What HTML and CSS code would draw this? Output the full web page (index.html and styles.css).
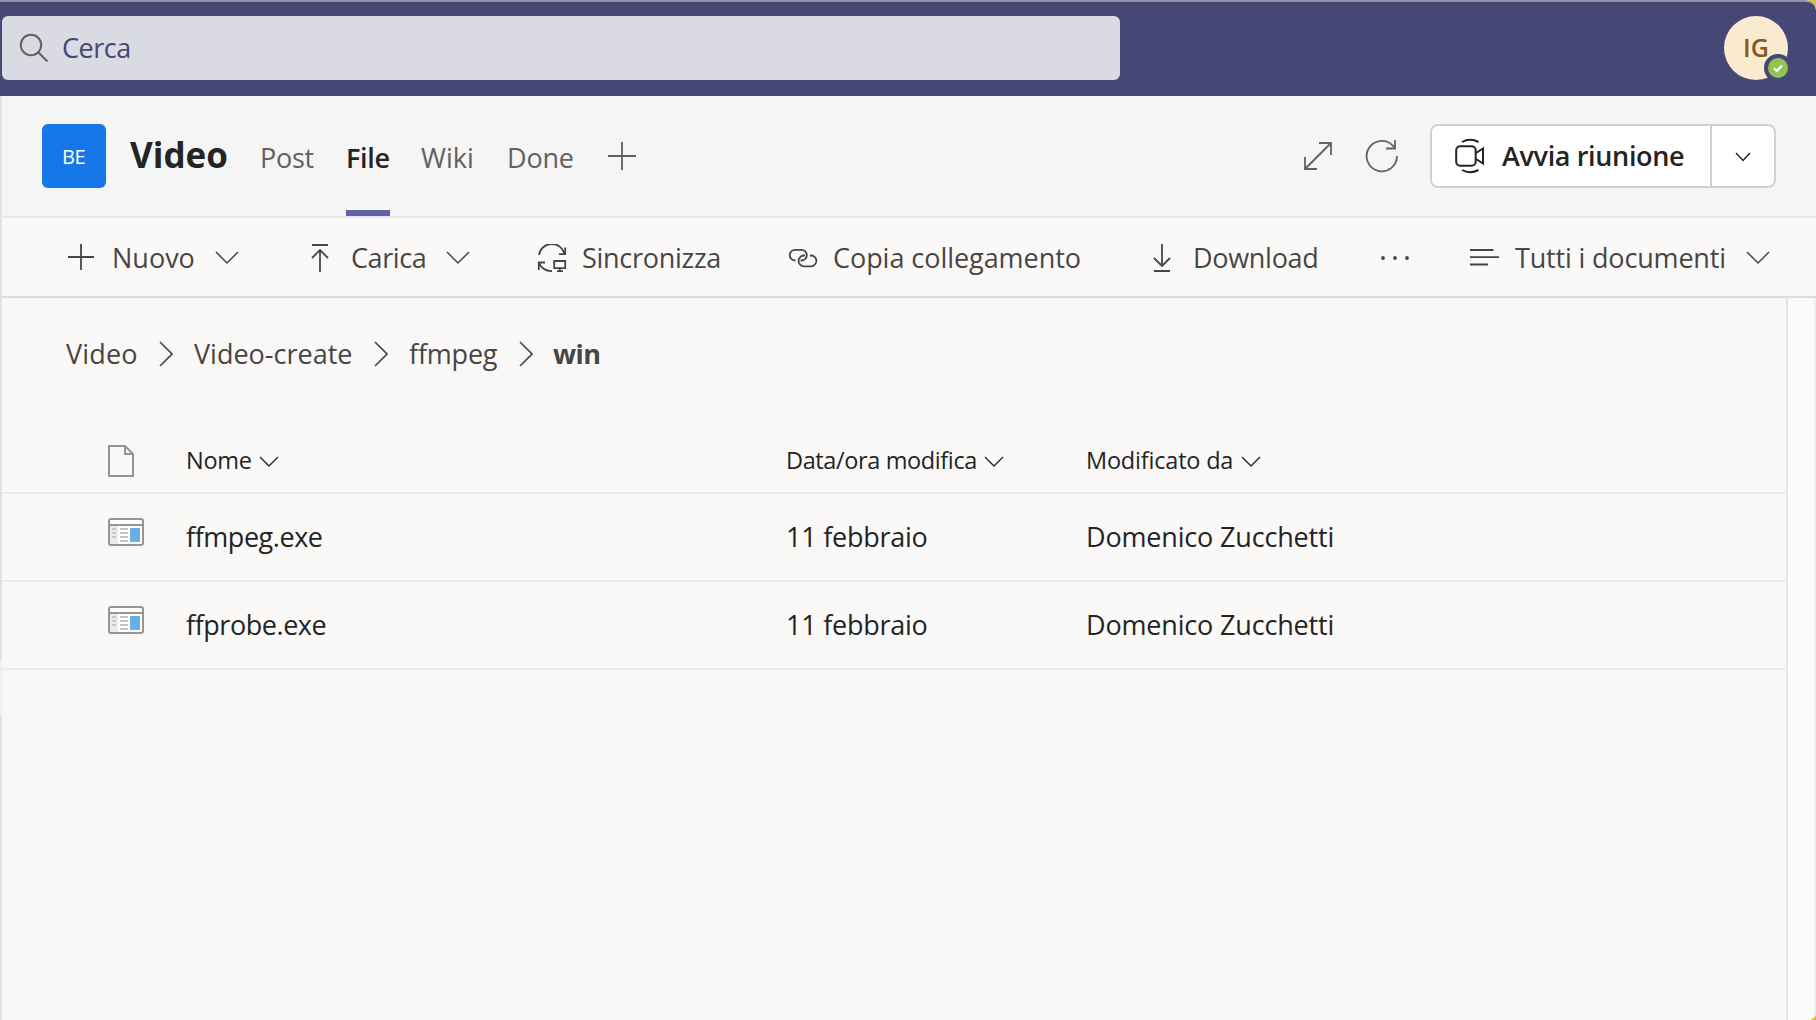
FILE: index.html
```html
<!DOCTYPE html>
<html lang="it">
<head>
<meta charset="utf-8">
<title>Video - File</title>
<link rel="stylesheet" href="styles.css">
</head>
<body>
<div class="app">
  <header class="topbar">
    <div class="search">
      <svg class="search-icon" width="32" height="32" viewBox="0 0 32 32"><circle cx="13" cy="13" r="10.2"/><path d="M20.500 20.500 29.500 29.500"/></svg>
      <span class="search-label">Cerca</span>
    </div>
    <div class="avatar"><span class="initials">IG</span>
      <span class="presence"><svg width="12" height="10" viewBox="0 0 12 10"><path d="M2 5.200 4.800 8 10 2.600"/></svg></span>
    </div>
  </header>

  <section class="channel">
    <div class="team">BE</div>
    <h1 class="title">Video</h1>
    <nav class="tabs">
      <span class="tab post">Post</span>
      <span class="tab file active">File</span>
      <span class="tab wiki">Wiki</span>
      <span class="tab done">Done</span>
    </nav>
    <svg class="add-tab" width="28" height="28" viewBox="0 0 28 28"><path d="M14 0V28M0 14H28"/></svg>
    <svg class="expand" width="30" height="30" viewBox="0 0 30 30"><path d="M16 2H28V14M28 2 2 28M2 16V28H14"/></svg>
    <svg class="refresh" width="34" height="34" viewBox="0 0 34 34"><path d="M32 17A15.200 15.200 0 1 1 27.500 6.300L30 8.700M30 1V9.500H21"/></svg>
    <div class="meet">
      <div class="meet-main">
        <svg width="30" height="36" viewBox="0 0 30 36"><rect x="1.200" y="8.200" width="19.500" height="19.500" rx="4"/><path d="M21 15 28 10.500V25.500L21 21M7 4Q15-.500 23.500 4M7 32Q15 36.500 23.500 32"/></svg>
        <span class="meet-label">Avvia riunione</span>
      </div>
      <div class="meet-more"><svg width="16" height="10" viewBox="0 0 16 10"><path d="M1 1 8 8.500 15 1"/></svg></div>
    </div>
  </section>

  <section class="toolbar">
    <div class="cmd new">
      <svg width="26" height="28" viewBox="0 0 26 28"><path d="M13 0V26M0 13H26"/></svg>
      <span class="label">Nuovo</span>
      <svg class="chevron" width="24" height="14" viewBox="0 0 24 14"><path d="M1 1 12 12 23 1"/></svg>
    </div>
    <div class="cmd upload">
      <svg width="18" height="28" viewBox="0 0 18 28"><path d="M1 1H17M9 28V6M1 14 9 6 17 14"/></svg>
      <span class="label">Carica</span>
      <svg class="chevron" width="24" height="14" viewBox="0 0 24 14"><path d="M1 1 12 12 23 1"/></svg>
    </div>
    <div class="cmd sync">
      <svg width="30" height="28" viewBox="0 0 30 28"><path d="M2 11A13 13 0 0 1 27.500 10M28.200 3.500V10.200H22M8 18.500H1.800V26M2 19A13 13 0 0 0 15 27M17.200 17H28.200V24.200H17.200ZM22.800 24.200V27.500M20 27.200H26"/></svg>
      <span class="label">Sincronizza</span>
    </div>
    <div class="cmd link">
      <svg width="30" height="28" viewBox="0 0 30 28"><path d="M7.500 16.500H7A5.300 5.300 0 0 1 7 5.900H13.500A5.300 5.300 0 0 1 13.500 16.500H12.500M22 11.500H23A5.400 5.400 0 0 1 23 22.300H16A5.400 5.400 0 0 1 16 11.500H17"/></svg>
      <span class="label">Copia collegamento</span>
    </div>
    <div class="cmd download">
      <svg width="18" height="28" viewBox="0 0 18 28"><path d="M1 27H17M9 0V22M1 14 9 22 17 14"/></svg>
      <span class="label">Download</span>
    </div>
    <div class="cmd more">
      <svg class="dots" width="30" height="28" viewBox="0 0 30 28"><circle cx="3" cy="14" r="1.900"/><circle cx="15" cy="14" r="1.900"/><circle cx="27" cy="14" r="1.900"/></svg>
    </div>
    <div class="cmd view">
      <svg width="30" height="28" viewBox="0 0 30 28"><path d="M0 6H23.500M0 13.200H29M0 20.500H18"/></svg>
      <span class="label">Tutti i documenti</span>
      <svg class="chevron" width="24" height="14" viewBox="0 0 24 14"><path d="M1 1 12 12 23 1"/></svg>
    </div>
  </section>

  <main class="body">
    <div class="content">
      <nav class="crumbs">
        <span class="crumb-video">Video</span>
        <svg width="14" height="26" viewBox="0 0 14 26"><path d="M1 1 13 13 1 25"/></svg>
        <span class="crumb-create">Video-create</span>
        <svg width="14" height="26" viewBox="0 0 14 26"><path d="M1 1 13 13 1 25"/></svg>
        <span class="crumb-ffmpeg">ffmpeg</span>
        <svg width="14" height="26" viewBox="0 0 14 26"><path d="M1 1 13 13 1 25"/></svg>
        <span class="crumb-current">win</span>
      </nav>
      <div class="row head">
        <svg class="page" width="26" height="32" viewBox="0 0 26 32"><path d="M1 1H17L25 9V31H1ZM17 1V9H25"/></svg>
        <span class="cell">Nome<svg width="20" height="12" viewBox="0 0 20 12"><path d="M1 1 10 10 19 1"/></svg></span>
        <span class="cell date-head">Data/ora modifica<svg width="20" height="12" viewBox="0 0 20 12"><path d="M1 1 10 10 19 1"/></svg></span>
        <span class="cell owner-head">Modificato da<svg width="20" height="12" viewBox="0 0 20 12"><path d="M1 1 10 10 19 1"/></svg></span>
      </div>
      <div class="row">
        <svg class="exe" width="36" height="28" viewBox="0 0 36 28"><rect class="frame" x="1" y="1" width="34" height="26" rx="2"/><path class="side" d="M2 8H10V26H2Z"/><path class="rule" d="M2 7H34"/><path class="lines" d="M4 11H8M4 15H8M4 19H8M12 11H20M12 15H20M12 19H20M12 23H20"/><rect class="pane" x="22" y="10" width="10" height="14" rx="1"/></svg>
        <span class="name">ffmpeg.exe</span><span class="date">11 febbraio</span><span class="owner">Domenico Zucchetti</span>
      </div>
      <div class="row">
        <svg class="exe" width="36" height="28" viewBox="0 0 36 28"><rect class="frame" x="1" y="1" width="34" height="26" rx="2"/><path class="side" d="M2 8H10V26H2Z"/><path class="rule" d="M2 7H34"/><path class="lines" d="M4 11H8M4 15H8M4 19H8M12 11H20M12 15H20M12 19H20M12 23H20"/><rect class="pane" x="22" y="10" width="10" height="14" rx="1"/></svg>
        <span class="name">ffprobe.exe</span><span class="date">11 febbraio</span><span class="owner">Domenico Zucchetti</span>
      </div>
    </div>
    <aside class="rail"></aside>
  </main>
</div>
</body>
</html>
```
FILE: styles.css
```css
* { box-sizing: border-box; }
body { margin: 0; font-family: "Open Sans", "Noto Sans", sans-serif; font-size: 27px; color: #484644; background: #d9bd3c; }
svg { display: block; flex: none; fill: none; stroke: currentColor; stroke-width: 1.8; }
span { white-space: nowrap; }
.app { width: 1816px; height: 1020px; display: flex; flex-direction: column; overflow: hidden; border-radius: 0 10px 8px 0; background: #f9f8f7; }

/* Title bar */
.topbar { height: 96px; flex: none; display: flex; align-items: center; justify-content: space-between; padding: 0 28px 2px 2px; background: #464775; border-top: 2px solid #9192ae; border-top-right-radius: 10px; }
.search { width: 1118px; height: 64px; display: flex; align-items: center; padding-left: 16px; background: #dadae3; border-radius: 6px; color: #464775; }
.search-icon { color: #616161; stroke-width: 2; }
.search-label { margin-left: 12px; padding-bottom: 1px; letter-spacing: -.45px; }
.avatar { position: relative; width: 64px; height: 64px; border-radius: 50%; background: #f9ead0; color: #835b17; font-size: 25px; font-weight: 600; display: flex; align-items: center; justify-content: center; }
.initials { padding-bottom: 2px; }
.presence { position: absolute; right: -4px; bottom: -2px; width: 28px; height: 28px; border: 4px solid #464775; border-radius: 50%; background: #92c353; color: #fff; display: flex; align-items: center; justify-content: center; }
.presence svg { stroke-width: 2.2; }

/* Channel header */
.channel { height: 122px; flex: none; display: flex; align-items: center; padding: 0 40px; background: #f5f5f5; border-bottom: 2px solid #e9e9e9; border-left: 2px solid #e2e2e2; color: #616161; }
.team { width: 64px; height: 64px; padding: 1px 1px 0 0; border-radius: 6px; background: #1677e8; color: #fff; font-size: 20px; letter-spacing: -.4px; display: flex; align-items: center; justify-content: center; }
.title { width: 130px; margin: 0 0 0 24px; font-size: 35px; font-weight: 700; color: #242424; line-height: 46px; padding-bottom: 2px; }
.tabs { display: flex; }
.tab { height: 120px; padding-top: 41px; line-height: 42px; border-bottom: 6px solid transparent; }
.post { width: 86px; letter-spacing: -.3px; }
.file { width: 44px; margin-right: 31px; letter-spacing: -.3px; }
.wiki { width: 86px; }
.done { width: 67px; letter-spacing: -.2px; }
.active { color: #242424; font-weight: 600; border-color: #6264a7; }
.add-tab { margin-left: 34px; }
.expand { margin-left: auto; }
.refresh { margin: 0 31px 0 32px; }
.meet { width: 346px; height: 64px; display: flex; border: 2px solid #d1d1d1; border-radius: 8px; background: #fff; color: #242424; }
.meet-main { width: 280px; display: flex; align-items: center; padding-left: 23px; gap: 17px; font-weight: 600; letter-spacing: -.35px; border-right: 2px solid #d1d1d1; }
.meet-label { padding-bottom: 1px; }
.meet-main svg { stroke-width: 2; }
.meet-more { flex: 1; display: flex; align-items: center; justify-content: center; padding-top: 2px; }
.meet-more svg { stroke-width: 1.5; }

/* Command bar */
.toolbar { height: 80px; flex: none; display: grid; grid-template-columns: 243px 226px 251px 365px 227px 90px 1fr; align-items: center; padding-left: 66px; background: #faf9f8; border-bottom: 2px solid #dedddb; border-left: 2px solid #e2e2e2; }
.cmd { display: flex; align-items: center; }
.cmd svg { margin-top: 2px; }
.cmd .chevron { stroke-width: 1.5; }
.label { padding-top: 1px; }
.new .label { margin-left: 18px; width: 103px; }
.upload .label { margin-left: 22px; width: 95px; letter-spacing: -.4px; }
.sync .label { margin-left: 15px; letter-spacing: -.28px; }
.link .label { margin-left: 15px; letter-spacing: -.05px; }
.download .label { margin-left: 22px; letter-spacing: -.3px; }
.view .label { margin-left: 15px; width: 231px; letter-spacing: -.17px; }
.dots { fill: currentColor; stroke: none; }

/* File list */
.body { flex: 1; display: flex; }
.content { flex: 1; padding-left: 2px; background: linear-gradient(#e2e2e2 0 362px, #efefee 362px 418px, #e2e2e2 418px) 0 0 / 2px 100% no-repeat #f9f8f7; }
.rail { width: 30px; background: #fbfbfb; border-left: 2px solid #e6e6e6; border-right: 2px solid #eee; }
.crumbs { height: 94px; display: flex; align-items: center; padding: 18px 0 0 64px; background: #f9f8f7; }
.crumbs svg { stroke-width: 1.6; }
.crumbs span { padding-bottom: 1px; }
.crumb-video { width: 93px; letter-spacing: .15px; }
.crumb-create { margin-left: 21px; width: 180px; }
.crumb-ffmpeg { margin-left: 21px; width: 110px; letter-spacing: -.2px; }
.crumb-current { margin-left: 20px; font-weight: 700; letter-spacing: -.5px; }
.row { height: 88px; display: grid; grid-template-columns: 78px 600px 300px 1fr; align-items: center; padding: 0 0 2px 106px; background: #faf9f8; border-bottom: 2px solid #edebe9; color: #242424; }
.head { height: 102px; padding: 35px 0 0 106px; font-size: 23.5px; }
.page { position: relative; top: 1px; color: #979593; stroke-width: 2; }
.cell { display: flex; align-items: center; gap: 7px; letter-spacing: -.28px; }
.cell svg { margin-top: 5px; stroke-width: 1.4; }
.date-head { letter-spacing: -.38px; }
.owner-head { gap: 8px; letter-spacing: -.2px; }
.exe { align-self: start; margin-top: 24px; }
.name { letter-spacing: -.45px; }
.date { letter-spacing: -.25px; }
.owner { letter-spacing: -.17px; }
.frame { fill: #fff; stroke: #979593; stroke-width: 2; }
.side { fill: #edebe9; stroke: none; }
.rule { stroke: #979593; stroke-width: 2; }
.lines { stroke: #c8c6c4; stroke-width: 2; }
.pane { fill: #69afe5; stroke: none; }
```
